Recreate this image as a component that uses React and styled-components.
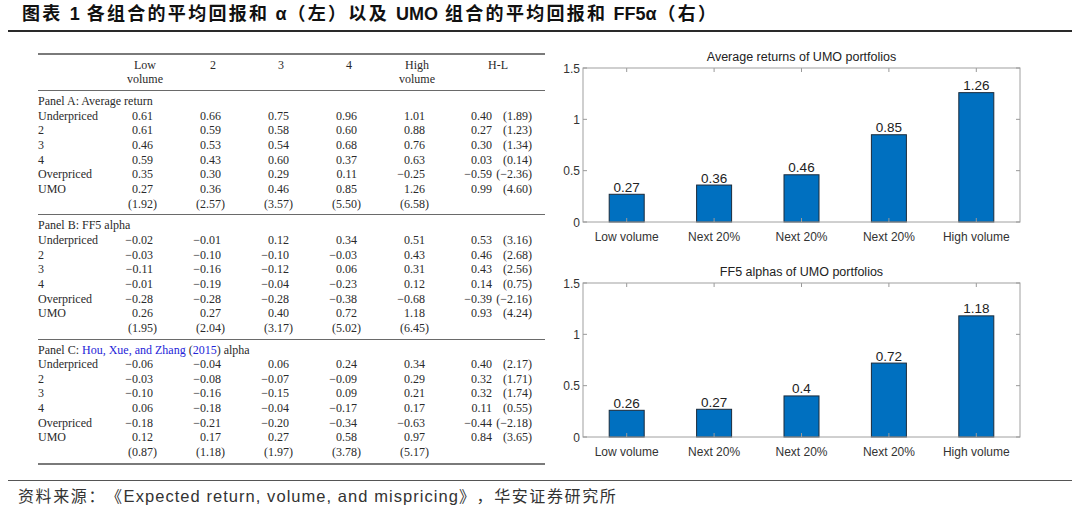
import React from 'react';
import styled, { createGlobalStyle } from 'styled-components';

const GlobalStyle = createGlobalStyle`
  html, body {
    margin: 0;
    padding: 0;
    background: #fff;
  }
`;

const Page = styled.div`
  width: 1080px;
  height: 511px;
  padding: 0 8px;
  box-sizing: border-box;
  background: #fff;
  overflow: hidden;
`;

const Header = styled.div`
  height: 30px;
  padding-left: 14px;
  border-bottom: 2px solid #2a2a2a;
  font-family: "Liberation Sans", "Noto Sans CJK SC", sans-serif;
  font-weight: 700;
  font-size: 18px;
  line-height: 28px;
  color: #111;
  white-space: nowrap;
  text-spacing-trim: space-all;
`;

// CJK runs are spaced wider than the Latin runs in the source image
const Run = styled.span`
  letter-spacing: ${(p) => (p.$latin ? p.$latinSpacing || '0' : p.$cjkSpacing || '2.3px')};
  margin: 0 ${(p) => p.$gap || '0'};
`;

const Main = styled.div`
  display: flex;
  height: 448px;
`;

const TableWrap = styled.div`
  width: 507px;
  margin-left: 30px;
  padding-top: 21px;
`;

const Table = styled.table`
  width: 507px;
  border-collapse: collapse;
  table-layout: fixed;
  font-family: "Liberation Serif", "Times New Roman", serif;
  font-size: 12px;
  line-height: 14.65px;
  color: #2a2a2a;
  white-space: nowrap;
`;

const Head = styled.thead`
  border-top: 2px solid #7a7a7a;
  border-bottom: 1.5px solid #6a6a6a;

  th {
    font-weight: 400;
    text-align: center;
    vertical-align: top;
    padding: 3px 0 4px;
    line-height: 14px;
  }
`;

const PanelBody = styled.tbody`
  border-bottom: 1.5px solid #6a6a6a;

  &:last-child {
    border-bottom: 2px solid #7a7a7a;
  }

  tr:first-child td {
    padding-top: 3px;
  }

  tr:last-child td {
    padding-bottom: 3px;
  }
`;

const Label = styled.td`
  padding: 0;
  text-align: left;
  overflow: visible;
`;

const Num = styled.td`
  padding: 0 26px 0 0;
  text-align: right;
`;

const Diff = styled.td`
  padding: 0 13px 0 0;
  text-align: left;
`;

const DiffVal = styled.span`
  display: inline-block;
  width: 41px;
  text-align: right;
`;

const DiffT = styled.span`
  display: inline-block;
  width: 40px;
  text-align: right;
`;

const Hang = styled.span`
  margin-right: -4px;
`;

const Cite = styled.span`
  color: #2424d8;
`;

const Charts = styled.div`
  width: 535px;
  padding-top: 13px;
  display: flex;
  flex-direction: column;
`;

const ChartSvg = styled.svg`
  display: block;
  font-family: "Liberation Sans", Arial, sans-serif;
`;

const Footer = styled.div`
  border-top: 1.5px solid #555;
  padding-left: 10px;
  height: 28px;
  font-family: "Liberation Sans", "Noto Sans CJK SC", sans-serif;
  font-size: 16px;
  line-height: 31px;
  color: #333;
  white-space: nowrap;
  text-spacing-trim: space-all;
`;

const FooterLatin = styled.span`
  font-size: 16.5px;
  letter-spacing: 1.05px;
`;

const panels = [
  {
    title: 'Panel A: Average return',
    rows: [
      ['Underpriced', '0.61', '0.66', '0.75', '0.96', '1.01', '0.40', '(1.89)'],
      ['2', '0.61', '0.59', '0.58', '0.60', '0.88', '0.27', '(1.23)'],
      ['3', '0.46', '0.53', '0.54', '0.68', '0.76', '0.30', '(1.34)'],
      ['4', '0.59', '0.43', '0.60', '0.37', '0.63', '0.03', '(0.14)'],
      ['Overpriced', '0.35', '0.30', '0.29', '0.11', '−0.25', '−0.59', '(−2.36)'],
      ['UMO', '0.27', '0.36', '0.46', '0.85', '1.26', '0.99', '(4.60)'],
    ],
    t: ['1.92', '2.57', '3.57', '5.50', '6.58'],
  },
  {
    title: 'Panel B: FF5 alpha',
    rows: [
      ['Underpriced', '−0.02', '−0.01', '0.12', '0.34', '0.51', '0.53', '(3.16)'],
      ['2', '−0.03', '−0.10', '−0.10', '−0.03', '0.43', '0.46', '(2.68)'],
      ['3', '−0.11', '−0.16', '−0.12', '0.06', '0.31', '0.43', '(2.56)'],
      ['4', '−0.01', '−0.19', '−0.04', '−0.23', '0.12', '0.14', '(0.75)'],
      ['Overpriced', '−0.28', '−0.28', '−0.28', '−0.38', '−0.68', '−0.39', '(−2.16)'],
      ['UMO', '0.26', '0.27', '0.40', '0.72', '1.18', '0.93', '(4.24)'],
    ],
    t: ['1.95', '2.04', '3.17', '5.02', '6.45'],
  },
  {
    title: 'hxz',
    rows: [
      ['Underpriced', '−0.06', '−0.04', '0.06', '0.24', '0.34', '0.40', '(2.17)'],
      ['2', '−0.03', '−0.08', '−0.07', '−0.09', '0.29', '0.32', '(1.71)'],
      ['3', '−0.10', '−0.16', '−0.15', '0.09', '0.21', '0.32', '(1.74)'],
      ['4', '0.06', '−0.18', '−0.04', '−0.17', '0.17', '0.11', '(0.55)'],
      ['Overpriced', '−0.18', '−0.21', '−0.20', '−0.34', '−0.63', '−0.44', '(−2.18)'],
      ['UMO', '0.12', '0.17', '0.27', '0.58', '0.97', '0.84', '(3.65)'],
    ],
    t: ['0.87', '1.18', '1.97', '3.78', '5.17'],
  },
];

const PanelTitle = ({ title }) =>
  title === 'hxz' ? (
    <>
      Panel C: <Cite>Hou, Xue, and Zhang</Cite> (<Cite>2015</Cite>) alpha
    </>
  ) : (
    title
  );

const Panel = ({ panel }) => (
  <PanelBody>
    <tr>
      <Label colSpan={7}>
        <PanelTitle title={panel.title} />
      </Label>
    </tr>
    {panel.rows.map((r) => (
      <tr key={r[0]}>
        <Label>{r[0]}</Label>
        {r.slice(1, 6).map((v, i) => (
          <Num key={i}>{v}</Num>
        ))}
        <Diff>
          <DiffVal>{r[6]}</DiffVal>
          <DiffT>{r[7]}</DiffT>
        </Diff>
      </tr>
    ))}
    <tr>
      <Label />
      {panel.t.map((v, i) => (
        <Num key={i}>
          ({v}
          <Hang>)</Hang>
        </Num>
      ))}
      <Diff />
    </tr>
  </PanelBody>
);

const cats = ['Low volume', 'Next 20%', 'Next 20%', 'Next 20%', 'High volume'];

const BarChart = ({ title, values }) => {
  const left = 38;
  const right = 475;
  const top = 23;
  const bottom = 177;
  const step = (right - left) / 5;
  const y = (v) => bottom - (v / 1.5) * (bottom - top);
  const ticks = [0, 0.5, 1, 1.5];
  return (
    <ChartSvg width="535" height="215" viewBox="0 0 535 215">
      <text x={(left + right) / 2} y="16" textAnchor="middle" fontSize="12.5" fill="#222">
        {title}
      </text>
      {values.map((v, i) => {
        const cx = left + step * (i + 0.5);
        return (
          <g key={i}>
            <rect x={cx - 17.5} y={y(v)} width="35" height={bottom - y(v)} fill="#0070c0" stroke="#1b2b3b" strokeWidth="1" />
            <text x={cx} y={y(v) - 2.5} textAnchor="middle" fontSize="13.5" fill="#222">
              {v}
            </text>
            <text x={cx} y="196" textAnchor="middle" fontSize="12" fill="#333">
              {cats[i]}
            </text>
            <line x1={cx} y1={top} x2={cx} y2={top + 4} stroke="#999" />
            <line x1={cx} y1={bottom} x2={cx} y2={bottom - 4} stroke="#999" />
          </g>
        );
      })}
      <rect x={left} y={top} width={right - left} height={bottom - top} fill="none" stroke="#a0a0a0" strokeWidth="1" />
      {ticks.map((t) => (
        <g key={t}>
          <line x1={left} y1={y(t)} x2={left + 4} y2={y(t)} stroke="#999" />
          <line x1={right} y1={y(t)} x2={right - 4} y2={y(t)} stroke="#999" />
          <text x={left - 3} y={y(t) + 4.5} textAnchor="end" fontSize="12" fill="#333">
            {t}
          </text>
        </g>
      ))}
    </ChartSvg>
  );
};

const App = () => (
  <Page>
    <GlobalStyle />
    <Header>
      <Run>图表</Run> <Run $latin $gap="2px">1</Run> <Run>各组合的平均回报和</Run>{' '}
      <Run $latin $gap="1px">α</Run>
      <Run>（左）以及</Run> <Run $latin $gap="2px">UMO</Run> <Run>组合的平均回报和</Run>{' '}
      <Run $latin $gap="1px">FF5α</Run>
      <Run>（右）</Run>
    </Header>
    <Main>
      <TableWrap>
        <Table>
          <colgroup>
            <col style={{ width: 73 }} />
            <col style={{ width: 68 }} />
            <col style={{ width: 68 }} />
            <col style={{ width: 68 }} />
            <col style={{ width: 68 }} />
            <col style={{ width: 68 }} />
            <col style={{ width: 94 }} />
          </colgroup>
          <Head>
            <tr>
              <th />
              <th>
                Low
                <br />
                volume
              </th>
              <th>2</th>
              <th>3</th>
              <th>4</th>
              <th>
                High
                <br />
                volume
              </th>
              <th>H-L</th>
            </tr>
          </Head>
          {panels.map((p, i) => (
            <Panel key={i} panel={p} />
          ))}
        </Table>
      </TableWrap>
      <Charts>
        <BarChart title="Average returns of UMO portfolios" values={[0.27, 0.36, 0.46, 0.85, 1.26]} />
        <BarChart title="FF5 alphas of UMO portfolios" values={[0.26, 0.27, 0.4, 0.72, 1.18]} />
      </Charts>
    </Main>
    <Footer>
      <Run $cjkSpacing="1.6px">资料来源：《</Run>
      <FooterLatin>Expected return, volume, and mispricing</FooterLatin>
      <Run $cjkSpacing="1.6px">》，华安证券研究所</Run>
    </Footer>
  </Page>
);

export default App;
